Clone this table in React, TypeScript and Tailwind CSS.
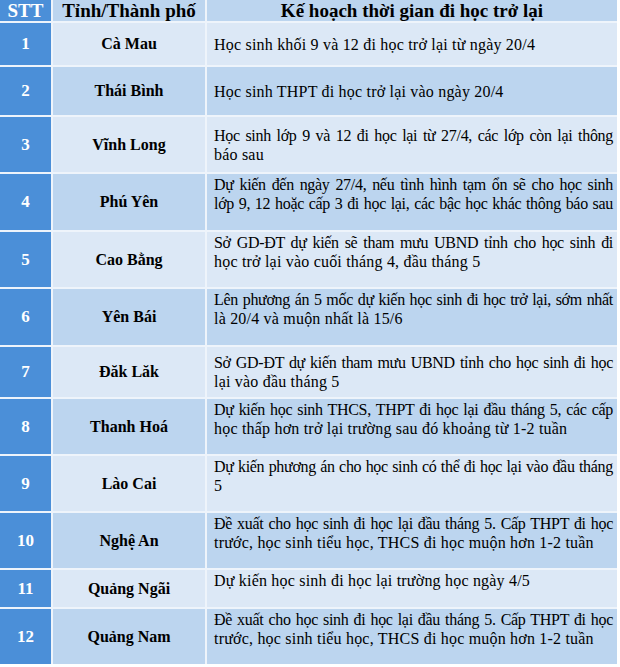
import React from "react";

type Line = { t: string; full?: boolean };
type Row = { n: number; name: string; lines: Line[]; h: number; center?: boolean };

const F = (t: string): Line => ({ t, full: true });
const L = (t: string): Line => ({ t });

const rows: Row[] = [
  { n: 1, name: "Cà Mau", lines: [L("Học sinh khối 9 và 12 đi học trở lại từ ngày 20/4")], h: 42, center: true },
  { n: 2, name: "Thái Bình", lines: [L("Học sinh THPT đi học trở lại vào ngày 20/4")], h: 48, center: true },
  { n: 3, name: "Vĩnh Long", lines: [F("Học sinh lớp 9 và 12 đi học lại từ 27/4, các lớp còn lại thông"), L("báo sau")], h: 55, center: true },
  { n: 4, name: "Phú Yên", lines: [F("Dự kiến đến ngày 27/4, nếu tình hình tạm ổn sẽ cho học sinh"), F("lớp 9, 12 hoặc cấp 3 đi học lại, các bậc học khác thông báo sau")], h: 56 },
  { n: 5, name: "Cao Bằng", lines: [F("Sở GD-ĐT dự kiến sẽ tham mưu UBND tỉnh cho học sinh đi"), L("học trở lại vào cuối tháng 4, đầu tháng 5")], h: 55 },
  { n: 6, name: "Yên Bái", lines: [F("Lên phương án 5 mốc dự kiến học sinh đi học trở lại, sớm nhất"), L("là 20/4 và muộn nhất là 15/6")], h: 56 },
  { n: 7, name: "Đăk Lăk", lines: [F("Sở GD-ĐT dự kiến tham mưu UBND tỉnh cho học sinh đi học"), L("lại vào đầu tháng 5")], h: 50, center: true },
  { n: 8, name: "Thanh Hoá", lines: [F("Dự kiến học sinh THCS, THPT đi học lại đầu tháng 5, các cấp"), L("học thấp hơn trở lại trường sau đó khoảng từ 1-2 tuần")], h: 55 },
  { n: 9, name: "Lào Cai", lines: [F("Dự kiến phương án cho học sinh có thể đi học lại vào đầu tháng"), L("5")], h: 55 },
  { n: 10, name: "Nghệ An", lines: [F("Đề xuất cho học sinh đi học lại đầu tháng 5. Cấp THPT đi học"), L("trước, học sinh tiểu học, THCS đi học muộn hơn 1-2 tuần")], h: 55 },
  { n: 11, name: "Quảng Ngãi", lines: [L("Dự kiến học sinh đi học lại trường học ngày 4/5")], h: 37 },
  { n: 12, name: "Quảng Nam", lines: [F("Đề xuất cho học sinh đi học lại đầu tháng 5. Cấp THPT đi học"), L("trước, học sinh tiểu học, THCS đi học muộn hơn 1-2 tuần")], h: 55 },
];

export default function App() {
  return (
    <div className="w-[620px] h-[667px] bg-white font-['Liberation_Serif','Times_New_Roman',serif]">
      <div className="w-[617px] grid grid-cols-[51px_152px_410px] gap-[2px] bg-[#eef4fb]">
        <div className="h-[21px] bg-[#4b8fd8] flex items-center justify-center text-white font-bold text-[19px] leading-none">STT</div>
        <div className="h-[21px] bg-[#bcd5ef] flex items-center justify-center text-black font-bold text-[19px] leading-none">Tỉnh/Thành phố</div>
        <div className="h-[21px] bg-[#bcd5ef] flex items-center justify-center text-black font-bold text-[19px] leading-none">Kế hoạch thời gian đi học trở lại</div>
        {rows.map((r, i) => {
          const bg = i % 2 === 0 ? "bg-[#dce8f6]" : "bg-[#bcd5ef]";
          return (
            <React.Fragment key={r.n}>
              <div className="bg-[#4b8fd8] flex items-center justify-center text-white font-bold text-[17px]" style={{ height: r.h }}>
                {r.n}
              </div>
              <div className={bg + " flex items-center justify-center text-black font-bold text-[16px]"} style={{ height: r.h }}>
                {r.name}
              </div>
              <div className={bg + " flex flex-col pl-[7px] text-black text-[16px] leading-[19px] " + (r.center ? "justify-center" : "justify-start pt-[1px]")} style={{ height: r.h }}>
                {r.lines.map((l, j) =>
                  l.full ? (
                    <div key={j} className="w-[399px] whitespace-nowrap text-justify [text-align-last:justify] tracking-[-0.3px]">{l.t}</div>
                  ) : (
                    <div key={j} className="whitespace-nowrap tracking-[0.2px]">{l.t}</div>
                  )
                )}
              </div>
            </React.Fragment>
          );
        })}
      </div>
    </div>
  );
}
